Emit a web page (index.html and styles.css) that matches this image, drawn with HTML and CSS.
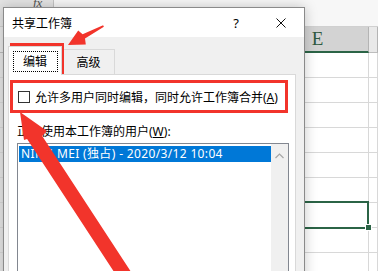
FILE: index.html
```html
<!DOCTYPE html>
<html lang="zh-CN">
<head>
    <meta charset="UTF-8">
    <meta name="viewport" content="width=device-width, initial-scale=1.0">
    <title>共享工作簿</title>
    <link rel="stylesheet" href="styles.css">
</head>
<body>
    <div class="screen">
        <!-- worksheet behind the dialog -->
        <div class="sheet">
            <div class="formula-bar">
                <span class="fx-box"><i>fx</i></span>
                <span class="formula-input"></span>
            </div>
            <div class="sheet-row col-headers">
                <div class="cell row-head"></div>
                <div class="cell"></div>
                <div class="cell col-selected">E</div>
                <div class="cell"></div>
            </div>
            <div class="sheet-row"><div class="cell row-head"></div><div class="cell"></div><div class="cell"></div><div class="cell"></div></div>
            <div class="sheet-row"><div class="cell row-head"></div><div class="cell"></div><div class="cell"></div><div class="cell"></div></div>
            <div class="sheet-row"><div class="cell row-head"></div><div class="cell"></div><div class="cell"></div><div class="cell"></div></div>
            <div class="sheet-row"><div class="cell row-head"></div><div class="cell"></div><div class="cell"></div><div class="cell"></div></div>
            <div class="sheet-row"><div class="cell row-head"></div><div class="cell"></div><div class="cell"></div><div class="cell"></div></div>
            <div class="sheet-row"><div class="cell row-head"></div><div class="cell"></div><div class="cell"></div><div class="cell"></div></div>
            <div class="sheet-row"><div class="cell row-head"></div><div class="cell"></div><div class="cell active-cell"><span class="fill-handle"></span></div><div class="cell"></div></div>
            <div class="sheet-row"><div class="cell row-head"></div><div class="cell"></div><div class="cell"></div><div class="cell"></div></div>
            <div class="sheet-row"><div class="cell row-head"></div><div class="cell"></div><div class="cell"></div><div class="cell"></div></div>
        </div>

        <div class="dialog">
            <div class="titlebar">
                <span class="title">共享工作簿</span>
                <span class="tb-btn">?</span>
                <span class="tb-btn">
                    <svg width="10" height="10" viewBox="0 0 10 10">
                        <path d="M0.5 0.5 L9.5 9.5 M9.5 0.5 L0.5 9.5" stroke="#111" stroke-width="1" fill="none"/>
                    </svg>
                </span>
            </div>
            <div class="dialog-body">
                <div class="tabs">
                    <div class="tab active"><span class="focus-ring">编辑</span></div>
                    <div class="tab">高级</div>
                </div>
                <div class="tab-panel">
                    <div class="share-option">
                        <span class="checkbox"></span>
                        <span>允许多用户同时编辑，同时允许工作簿合并(<u>A</u>)</span>
                    </div>
                    <div class="users-label">正在使用本工作簿的用户(<u>W</u>):</div>
                    <div class="users-list">
                        <div class="users-items">
                            <div class="user selected">NING MEI (独占) - 2020/3/12 10:04</div>
                        </div>
                        <div class="scrollbar">
                            <svg width="9" height="6" viewBox="0 0 9 6">
                                <path d="M0.5 5 L4.5 1 L8.5 5" stroke="#a6a6a6" stroke-width="1.2" fill="none"/>
                            </svg>
                        </div>
                    </div>
                </div>
            </div>
        </div>

        <!-- red annotations drawn over the screenshot -->
        <svg class="marks" width="378" height="271" viewBox="0 0 378 271">
            <rect x="11.5" y="44.5" width="51" height="28" fill="none" stroke="#f2342b" stroke-width="3"/>
            <rect x="11.5" y="81.5" width="275" height="30" fill="none" stroke="#f2342b" stroke-width="3"/>
            <polygon points="68,45 78.2,30.4 82.6,34.2 103.1,25.3 103.9,26.7 85,38.6 85.8,44.4" fill="#f2342b"/>
            <polygon points="20,112 47,131 42.2,136 139.6,285 122.6,285 27.1,139 24,140" fill="#f2342b"/>
        </svg>
    </div>
</body>
</html>
```

FILE: styles.css
```css
body {
    margin: 0;
    font-family: "Noto Sans", "Noto Sans CJK SC", sans-serif;
    font-size: 12px;
    color: #000;
}
.screen {
    position: relative;
    width: 378px;
    height: 271px;
    overflow: hidden;
    background: #fff;
}

/* worksheet */
.formula-bar {
    display: flex;
    height: 27px;
    background: #f7f7f7;
    border-bottom: 1px solid #d0d0d0;
    box-sizing: border-box;
}
.fx-box {
    width: 54px;
    border-right: 1px solid #c4c4c4;
    background: #e4e4e4;
    font-family: "Liberation Serif", serif;
    font-size: 13px;
    line-height: 6px;
    padding-left: 33px;
    box-sizing: border-box;
    color: #555;
}
.formula-input {
    flex: 1;
}
.sheet-row {
    display: grid;
    grid-template-columns: 30px 237px 102px 1fr;
    height: 25px;
}
.cell {
    border-right: 1px solid #d8d8d8;
    border-bottom: 1px solid #d8d8d8;
}
.row-head {
    background: #e6e6e6;
}
.col-headers {
    height: 26px;
}
.col-headers .cell {
    background: #e9e9e9;
    border-right-color: #b4b4b4;
    border-bottom-color: #bdbdbd;
}
.col-headers .col-selected {
    background: #d3d3d3;
    border-bottom: 2px solid #2b6446;
    color: #2f5a40;
    font-family: "Liberation Serif", serif;
    font-size: 19px;
    line-height: 24px;
    text-align: center;
}
.active-cell {
    position: relative;
}
.active-cell::after {
    content: "";
    position: absolute;
    left: -1px;
    top: -2px;
    right: -1px;
    bottom: -2px;
    border: 2px solid #2b6446;
}
.fill-handle {
    position: absolute;
    right: -4px;
    bottom: -4px;
    width: 5px;
    height: 5px;
    background: #2b6446;
    border: 1px solid #fff;
    z-index: 1;
}

/* dialog */
.dialog {
    position: absolute;
    left: 3px;
    top: 7px;
    width: 302px;
    height: 280px;
    box-sizing: border-box;
    border: 1px solid #8a8a8a;
    background: #f0f0f0;
    box-shadow: 0 0 12px rgba(0, 0, 0, 0.22);
    display: flex;
    flex-direction: column;
}
.titlebar {
    display: flex;
    align-items: center;
    height: 30px;
    background: #fff;
}
.title {
    flex: 1;
    padding-left: 8px;
}
.tb-btn {
    width: 44px;
    display: flex;
    justify-content: center;
    align-items: center;
    font-size: 13px;
}
.tb-btn:last-child {
    width: 46px;
}
.dialog-body {
    flex: 1;
    display: flex;
    flex-direction: column;
    padding: 9px 8px 0 4px;
}
.tabs {
    display: flex;
    align-items: flex-end;
    height: 28px;
}
.tab {
    width: 53px;
    height: 25px;
    box-sizing: border-box;
    border: 1px solid #d9d9d9;
    border-bottom: none;
    background: #f0f0f0;
    display: flex;
    justify-content: center;
    align-items: center;
}
.tab.active {
    position: relative;
    z-index: 1;
    width: 54px;
    height: 29px;
    margin-bottom: -1px;
    background: #fff;
}
.focus-ring {
    width: 45px;
    height: 21px;
    border: 1px dotted #000;
    display: flex;
    justify-content: center;
    align-items: center;
    box-sizing: border-box;
}
.tab-panel {
    flex: 1;
    background: #fff;
    border: 1px solid #d9d9d9;
    padding: 0 6px 0 8px;
}
.share-option {
    display: flex;
    align-items: center;
    gap: 5px;
    height: 16px;
    margin-top: 14px;
    padding-left: 1px;
    white-space: nowrap;
}
.checkbox {
    width: 12px;
    height: 12px;
    box-sizing: border-box;
    border: 1px solid #333;
    background: #fff;
}
.users-label {
    margin-top: 19px;
    line-height: 16px;
}
.users-list {
    display: flex;
    height: 140px;
    margin-top: 3px;
    border: 1px solid #828790;
}
.users-items {
    flex: 1;
    padding: 2px 0 0 1px;
}
.user {
    height: 16px;
    line-height: 16px;
    padding-left: 2px;
    letter-spacing: 0.35px;
    white-space: nowrap;
}
.user.selected {
    background: #0078d7;
    color: #fff;
}
.scrollbar {
    width: 17px;
    background: #f0f0f0;
    display: flex;
    justify-content: center;
    padding-top: 9px;
    box-sizing: border-box;
}

/* annotation layer */
.marks {
    position: absolute;
    left: 0;
    top: 0;
    pointer-events: none;
}
```
